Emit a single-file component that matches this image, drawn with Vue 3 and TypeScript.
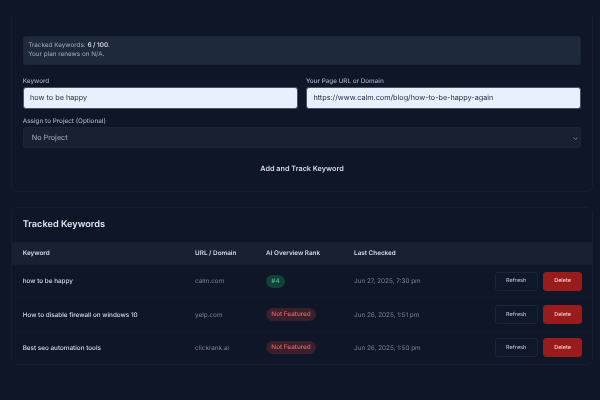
<template>
  <div class="page">
    <section class="card form-card">
      <div class="usage">
        <div>Tracked Keywords: <strong>6 / 100</strong>.</div>
        <div>Your plan renews on N/A.</div>
      </div>
      <div class="fields">
        <label class="field">
          <span class="label">Keyword</span>
          <input class="input" type="text" value="how to be happy" />
        </label>
        <label class="field">
          <span class="label">Your Page URL or Domain</span>
          <input class="input" type="text" value="https://www.calm.com/blog/how-to-be-happy-again" />
        </label>
      </div>
      <label class="field project">
        <span class="label">Assign to Project (Optional)</span>
        <span class="select">
          No Project
          <svg class="chevron" width="5" height="5" viewBox="0 0 8 8" fill="none">
            <path d="M1 2.5 4 5.5l3-3" stroke="#7c8799" stroke-width="1.5" />
          </svg>
        </span>
      </label>
      <button class="submit" type="button">Add and Track Keyword</button>
    </section>

    <section class="card list-card">
      <h2 class="title">Tracked Keywords</h2>
      <table class="table">
        <thead>
          <tr>
            <th class="col-keyword">Keyword</th>
            <th class="col-url">URL / Domain</th>
            <th class="col-rank">AI Overview Rank</th>
            <th>Last Checked</th>
            <th></th>
          </tr>
        </thead>
        <tbody>
          <tr v-for="row in rows" :key="row.keyword">
            <td class="keyword">{{ row.keyword }}</td>
            <td class="muted">{{ row.url }}</td>
            <td>
              <span class="badge" :class="row.rank ? 'badge--rank' : 'badge--none'">
                {{ row.rank || 'Not Featured' }}
              </span>
            </td>
            <td class="muted">{{ row.checked }}</td>
            <td>
              <div class="actions">
                <button class="btn btn--ghost" type="button">Refresh</button>
                <button class="btn btn--danger" type="button">Delete</button>
              </div>
            </td>
          </tr>
        </tbody>
      </table>
    </section>
  </div>
</template>

<script setup lang="ts">
interface Row {
  keyword: string
  url: string
  rank: string
  checked: string
}

const rows: Row[] = [
  { keyword: 'how to be happy', url: 'calm.com', rank: '#4', checked: 'Jun 27, 2025, 7:30 pm' },
  { keyword: 'How to disable firewall on windows 10', url: 'yelp.com', rank: '', checked: 'Jun 26, 2025, 1:51 pm' },
  { keyword: 'Best seo automation tools', url: 'clickrank.ai', rank: '', checked: 'Jun 26, 2025, 1:50 pm' }
]
</script>

<style>
html,
body {
  margin: 0;
  background: #0e1627;
}
</style>

<style scoped>
.page {
  width: 600px;
  height: 400px;
  box-sizing: border-box;
  padding: 0 7.3px 0 11.3px;
  overflow: hidden;
  background: #0e1627;
  font-family: Inter, "Liberation Sans", sans-serif;
  text-rendering: geometricPrecision;
  color: #cbd5e1;
  filter: blur(0.3px);
}

.card {
  border: 1px solid #141e30;
  border-radius: 6px;
}

.form-card {
  margin-top: 12px;
  height: 179.5px;
  box-sizing: border-box;
  padding: 23px 10.4px 0;
  border-top-color: #0e1627;
}

.usage {
  height: 29px;
  box-sizing: border-box;
  padding: 4px 4.5px;
  background: #1e293b;
  border: 1px solid #1b2536;
  border-radius: 3px;
  font-size: 6.35px;
  line-height: 9px;
  color: #a3aebd;
}

.usage strong {
  font-weight: 600;
  color: #d5dce6;
}

.fields {
  display: grid;
  grid-template-columns: 1fr 1fr;
  gap: 8px;
  margin-top: 11px;
}

.field {
  display: block;
}

.label {
  display: block;
  height: 10px;
  font-size: 6.35px;
  line-height: 10px;
  font-weight: 500;
  color: #a3aebd;
}

.input {
  display: block;
  width: 100%;
  height: 22px;
  margin-top: 0.5px;
  box-sizing: border-box;
  padding: 0 6.4px;
  background: #e8f0fe;
  border: 1px solid #475569;
  border-radius: 3px;
  font-family: inherit;
  font-size: 7.25px;
  text-rendering: geometricPrecision;
  color: #1e293b;
}

.project {
  margin-top: 7px;
}

.select {
  position: relative;
  display: block;
  height: 21px;
  margin-top: 1.5px;
  box-sizing: border-box;
  padding-left: 8px;
  background: #172132;
  border: 1px solid #1b2536;
  border-radius: 3px;
  font-size: 7.25px;
  line-height: 19px;
  color: #a9b2bf;
}

.chevron {
  position: absolute;
  right: 2px;
  top: 7.5px;
}

.submit {
  display: block;
  margin: 15px auto 0;
  padding: 0;
  background: none;
  border: 0;
  font-family: inherit;
  font-size: 7.25px;
  line-height: 12px;
  font-weight: 600;
  text-rendering: geometricPrecision;
  color: #d5dce6;
}

.list-card {
  margin-top: 15px;
  height: 158px;
  box-sizing: border-box;
}

.title {
  height: 34px;
  box-sizing: border-box;
  margin: 0;
  padding: 0.4px 0 0 10.4px;
  font-size: 9.2px;
  line-height: 33px;
  font-weight: 600;
  color: #e2e8f0;
}

.table {
  width: 100%;
  border-collapse: collapse;
  table-layout: fixed;
  font-size: 6.35px;
}

th {
  height: 21.5px;
  padding: 0 0 0 10.4px;
  background: #172131;
  border-top: 1px solid #141e30;
  border-bottom: 1px solid #141e30;
  text-align: left;
  font-weight: 600;
  color: #d5dce6;
}

td {
  height: 32.4px;
  padding: 0 0 0 10.4px;
  border-bottom: 1px solid #111a2c;
}

tbody tr:last-child td {
  border-bottom: 0;
}

.col-keyword {
  width: 162px;
}

.col-url {
  width: 60.6px;
}

.col-rank {
  width: 77.6px;
}

.keyword {
  font-weight: 500;
  color: #d5dce6;
}

.muted {
  color: #7a8698;
}

.badge {
  display: inline-block;
  height: 13px;
  padding: 0 5.3px;
  border-radius: 7px;
  line-height: 13px;
  font-weight: 500;
}

.badge--rank {
  background: #134038;
  color: #45c796;
}

.badge--none {
  background: #3a1f2c;
  color: #e76464;
}

.actions {
  display: flex;
  justify-content: flex-end;
  gap: 5.4px;
  padding-right: 9.6px;
}

.btn {
  height: 19px;
  box-sizing: border-box;
  padding: 0;
  border-radius: 3px;
  font-family: inherit;
  font-size: 5.5px;
  font-weight: 500;
  text-rendering: geometricPrecision;
}

.btn--ghost {
  width: 43px;
  background: #0f172a;
  border: 1px solid #1b2536;
  color: #b4bdcb;
}

.btn--danger {
  width: 39px;
  background: #991b1b;
  border: 1px solid #991b1b;
  color: #f6d0d0;
}
</style>
